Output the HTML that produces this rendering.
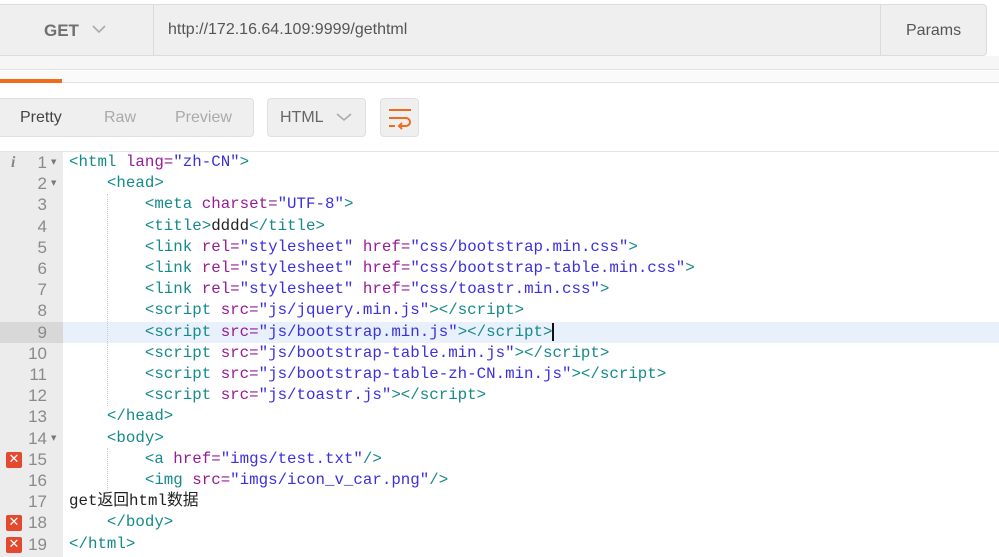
<!DOCTYPE html>
<html><head><meta charset="utf-8"><style>
*{margin:0;padding:0;box-sizing:border-box}
body{width:999px;height:556px;overflow:hidden;background:#fff;font-family:"Liberation Sans","Noto Sans CJK SC",sans-serif;position:relative}
.abs{position:absolute}
.bar{left:-4px;top:4px;width:991px;height:52px;background:#efefef;border:1px solid #dcdcdc;border-radius:4px}
.btn{background:#efefef;border:1px solid #e0e0e0;border-radius:4px}
.code{position:absolute;left:0;top:151px;width:999px;height:405px;border-top:1px solid #e6e6e6}
.gut{position:absolute;left:0;top:0;width:63px;height:405px;background:#ececec}
.ln{position:absolute;left:0;width:999px;height:21.2px;font-family:"Liberation Mono","DejaVu Sans Mono","Noto Sans CJK SC",monospace;font-size:15.8px;line-height:21.2px;white-space:pre}
.num{position:absolute;left:0;width:47px;text-align:right;color:#8a8a8a;font-family:"Liberation Sans",sans-serif;font-size:17px}
.txt{position:absolute;left:69px;color:#222}
.t{color:#158a8a}.a{color:#961b96}.s{color:#3b2fe0}
.err{position:absolute;left:6px;top:3px;width:16px;height:16px;background:#e2492f;border-radius:2px;color:#fff;font:bold 13px/16px "DejaVu Sans",sans-serif;text-align:center}
.fold{position:absolute;left:51px;top:0;color:#777;font-size:7px;font-family:"DejaVu Sans",sans-serif}
.guide{position:absolute;border-left:1px dotted #ccc}
</style></head><body>
<div class="abs" style="left:0;top:56px;width:999px;height:14px;background:#f6f6f6;border-bottom:1px solid #e2e2e2"></div>
<div class="abs" style="left:0;top:71px;width:999px;height:12px;background:#fafafa;border-bottom:1px solid #e2e2e2"></div>
<div class="abs" style="left:0;top:79px;width:62px;height:4px;background:#f26b1d"></div>
<div class="abs bar"></div>
<div class="abs" style="left:153px;top:5px;width:1px;height:50px;background:#dadada"></div>
<div class="abs" style="left:880px;top:5px;width:1px;height:50px;background:#dadada"></div>
<div class="abs" style="left:44px;top:21px;font-size:17px;color:#707070;font-weight:bold">GET</div>
<svg class="abs" style="left:92px;top:25px" width="14" height="9"><path d="M1 1L7 7L13 1" fill="none" stroke="#aaa" stroke-width="1.6"/></svg>
<div class="abs" style="left:168px;top:21px;font-size:16px;color:#555">http://172.16.64.109:9999/gethtml</div>
<div class="abs" style="left:906px;top:22px;font-size:16px;color:#555">Params</div>
<div class="abs btn" style="left:-4px;top:98px;width:258px;height:39px"></div>
<div class="abs" style="left:20px;top:109px;font-size:16px;color:#444">Pretty</div>
<div class="abs" style="left:104px;top:109px;font-size:16px;color:#aaa">Raw</div>
<div class="abs" style="left:175px;top:109px;font-size:16px;color:#aaa">Preview</div>
<div class="abs btn" style="left:267px;top:98px;width:99px;height:39px"></div>
<div class="abs" style="left:280px;top:109px;font-size:16px;color:#666">HTML</div>
<svg class="abs" style="left:336px;top:113px" width="16" height="9"><path d="M1 1L8 7L15 1" fill="none" stroke="#aaa" stroke-width="1.6"/></svg>
<div class="abs btn" style="left:380px;top:98px;width:39px;height:39px"></div>
<svg class="abs" style="left:387px;top:106px" width="26" height="24"><g fill="none" stroke="#f26b1d" stroke-width="2"><path d="M2 4H24"/><path d="M2 12H19a4 4 0 0 1 0 8H12"/><path d="M15 17l-3 3 3 3"/><path d="M2 20H8"/></g></svg>
<div class="code">
<div class="gut"></div>
<div class="abs" style="left:63px;top:169.6px;width:936px;height:21.2px;background:#e8f1fb"></div>
<div class="abs" style="left:0;top:169.6px;width:63px;height:21.2px;background:#d8d8d8"></div>
<div class="guide" style="left:107px;top:42px;height:212px"></div>
<div class="guide" style="left:107px;top:296px;height:42px"></div>
<div class="ln" style="top:0"><span style="position:absolute;left:11px;color:#888;font-style:italic;font-family:'Liberation Serif',serif;font-weight:bold">i</span><span class="num">1</span><span class="fold">▼</span><span class="txt"><span class="t">&lt;html</span> <span class="a">lang=</span><span class="s">"zh-CN"</span><span class="t">&gt;</span></span></div>
<div class="ln" style="top:21.2px"><span class="num">2</span><span class="fold">▼</span><span class="txt">    <span class="t">&lt;head&gt;</span></span></div>
<div class="ln" style="top:42.4px"><span class="num">3</span><span class="txt">        <span class="t">&lt;meta</span> <span class="a">charset=</span><span class="s">"UTF-8"</span><span class="t">&gt;</span></span></div>
<div class="ln" style="top:63.6px"><span class="num">4</span><span class="txt">        <span class="t">&lt;title&gt;</span>dddd<span class="t">&lt;/title&gt;</span></span></div>
<div class="ln" style="top:84.8px"><span class="num">5</span><span class="txt">        <span class="t">&lt;link</span> <span class="a">rel=</span><span class="s">"stylesheet"</span> <span class="a">href=</span><span class="s">"css/bootstrap.min.css"</span><span class="t">&gt;</span></span></div>
<div class="ln" style="top:106px"><span class="num">6</span><span class="txt">        <span class="t">&lt;link</span> <span class="a">rel=</span><span class="s">"stylesheet"</span> <span class="a">href=</span><span class="s">"css/bootstrap-table.min.css"</span><span class="t">&gt;</span></span></div>
<div class="ln" style="top:127.2px"><span class="num">7</span><span class="txt">        <span class="t">&lt;link</span> <span class="a">rel=</span><span class="s">"stylesheet"</span> <span class="a">href=</span><span class="s">"css/toastr.min.css"</span><span class="t">&gt;</span></span></div>
<div class="ln" style="top:148.4px"><span class="num">8</span><span class="txt">        <span class="t">&lt;script</span> <span class="a">src=</span><span class="s">"js/jquery.min.js"</span><span class="t">&gt;&lt;/script&gt;</span></span></div>
<div class="ln" style="top:169.6px"><span class="num">9</span><span class="txt">        <span class="t">&lt;script</span> <span class="a">src=</span><span class="s">"js/bootstrap.min.js"</span><span class="t">&gt;&lt;/script&gt;</span><span style="border-left:2px solid #111"></span></span></div>
<div class="ln" style="top:190.8px"><span class="num">10</span><span class="txt">        <span class="t">&lt;script</span> <span class="a">src=</span><span class="s">"js/bootstrap-table.min.js"</span><span class="t">&gt;&lt;/script&gt;</span></span></div>
<div class="ln" style="top:212px"><span class="num">11</span><span class="txt">        <span class="t">&lt;script</span> <span class="a">src=</span><span class="s">"js/bootstrap-table-zh-CN.min.js"</span><span class="t">&gt;&lt;/script&gt;</span></span></div>
<div class="ln" style="top:233.2px"><span class="num">12</span><span class="txt">        <span class="t">&lt;script</span> <span class="a">src=</span><span class="s">"js/toastr.js"</span><span class="t">&gt;&lt;/script&gt;</span></span></div>
<div class="ln" style="top:254.4px"><span class="num">13</span><span class="txt">    <span class="t">&lt;/head&gt;</span></span></div>
<div class="ln" style="top:275.6px"><span class="num">14</span><span class="fold">▼</span><span class="txt">    <span class="t">&lt;body&gt;</span></span></div>
<div class="ln" style="top:296.8px"><span class="err">✕</span><span class="num">15</span><span class="txt">        <span class="t">&lt;a</span> <span class="a">href=</span><span class="s">"imgs/test.txt"</span><span class="t">/&gt;</span></span></div>
<div class="ln" style="top:318px"><span class="num">16</span><span class="txt">        <span class="t">&lt;img</span> <span class="a">src=</span><span class="s">"imgs/icon_v_car.png"</span><span class="t">/&gt;</span></span></div>
<div class="ln" style="top:339.2px"><span class="num">17</span><span class="txt">get返回html数据</span></div>
<div class="ln" style="top:360.4px"><span class="err">✕</span><span class="num">18</span><span class="txt">    <span class="t">&lt;/body&gt;</span></span></div>
<div class="ln" style="top:381.6px"><span class="err">✕</span><span class="num">19</span><span class="txt"><span class="t">&lt;/html&gt;</span></span></div>
</div>
</body></html>
